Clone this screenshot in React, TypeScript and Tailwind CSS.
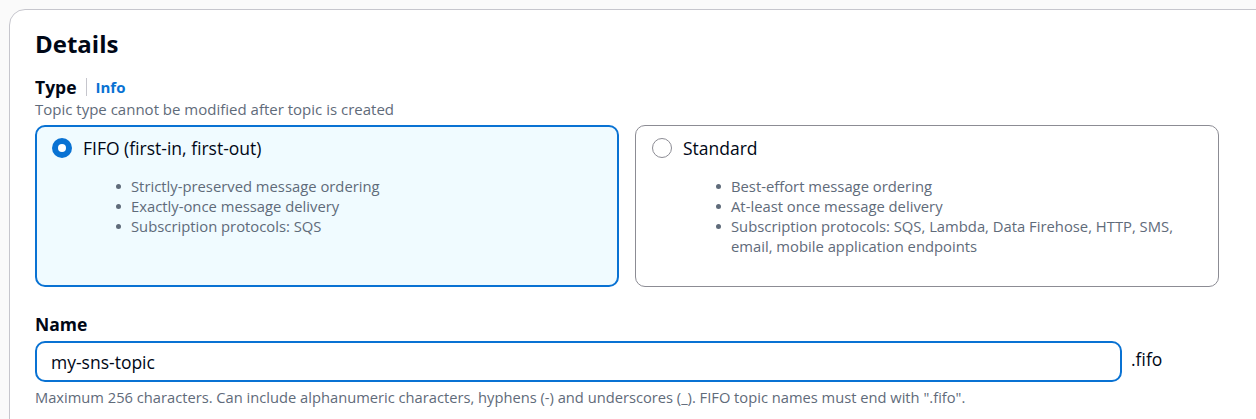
import React from "react";

function Radio({ checked }: { checked: boolean }) {
  return checked ? (
    <span className="flex h-[20px] w-[20px] shrink-0 items-center justify-center rounded-full bg-[#0972d3]">
      <span className="h-[8px] w-[8px] rounded-full bg-white" />
    </span>
  ) : (
    <span className="h-[20px] w-[20px] shrink-0 rounded-full border-[1.5px] border-[#8c8c94] bg-white" />
  );
}

function TypeCard({
  checked,
  label,
  items,
}: {
  checked: boolean;
  label: string;
  items: React.ReactNode[];
}) {
  return (
    <div
      className={
        checked
          ? "h-[162px] rounded-[10px] border-2 border-[#0972d3] bg-[#f0fbff] pl-[15px] pt-[9px]"
          : "h-[162px] rounded-[10px] border border-[#8c8c94] bg-white pl-[16px] pt-[10px]"
      }
    >
      <div className="flex h-[24px] items-center gap-[11px]">
        <Radio checked={checked} />
        <span className="text-[17.5px] leading-[24px] text-[#000716]">{label}</span>
      </div>
      <ul className="mt-[16px] pl-[79px] text-[14.8px] leading-[20px] text-[#5f6b7a]">
        {items.map((t, i) => (
          <li key={i} className="relative">
            <span className="absolute left-[-15px] top-[8px] h-[5px] w-[5px] rounded-full bg-[#5f6b7a]" />
            {t}
          </li>
        ))}
      </ul>
    </div>
  );
}

export default function App() {
  return (
    <div
      className="h-[419px] overflow-hidden bg-[#fafafa] pl-[9px] pt-[9px]"
      style={{ fontFamily: "'Open Sans', sans-serif" }}
    >
      <div className="h-[430px] w-[1300px] rounded-tl-[16px] border border-[#c6c6cd] bg-white pl-[25px] pt-[19px]">
        <h2 className="text-[24px] font-bold leading-[30px] text-[#000716]">Details</h2>

        <div className="mt-[17px] flex h-[22px] items-center">
          <span className="text-[17.5px] font-bold leading-[22px] text-[#000716]">Type</span>
          <span className="mx-[9px] h-[18px] w-px bg-[#c6c6cd]" />
          <span className="text-[15px] font-bold leading-[22px] text-[#0972d3]">Info</span>
        </div>
        <div className="text-[15px] leading-[22px] text-[#5f6b7a]">
          Topic type cannot be modified after topic is created
        </div>

        <div className="mt-[5px] grid w-[1184px] grid-cols-2 gap-[16px]">
          <TypeCard
            checked
            label="FIFO (first-in, first-out)"
            items={[
              "Strictly-preserved message ordering",
              "Exactly-once message delivery",
              "Subscription protocols: SQS",
            ]}
          />
          <TypeCard
            checked={false}
            label="Standard"
            items={[
              "Best-effort message ordering",
              "At-least once message delivery",
              <>
                <span className="whitespace-nowrap">Subscription protocols: SQS, Lambda, Data Firehose, HTTP, SMS,</span>
                <br />
                email, mobile application endpoints
              </>,
            ]}
          />
        </div>

        <div className="mt-[26px] text-[17.5px] font-bold leading-[22px] text-[#000716]">Name</div>
        <div className="mt-[6px] flex items-center">
          <div className="flex h-[41px] w-[1087px] items-center rounded-[10px] border-2 border-[#0972d3] bg-white pl-[14px]">
            <span className="text-[17.5px] leading-[24px] text-[#000716]">my-sns-topic</span>
          </div>
          <span className="ml-[9px] pb-[6px] text-[17.5px] leading-[24px] text-[#000716]">.fifo</span>
        </div>
        <div className="mt-[5px] text-[14.7px] leading-[20px] text-[#5f6b7a]">
          Maximum 256 characters. Can include alphanumeric characters, hyphens (-) and underscores (_). FIFO topic names must end with ".fifo".
        </div>
      </div>
    </div>
  );
}
